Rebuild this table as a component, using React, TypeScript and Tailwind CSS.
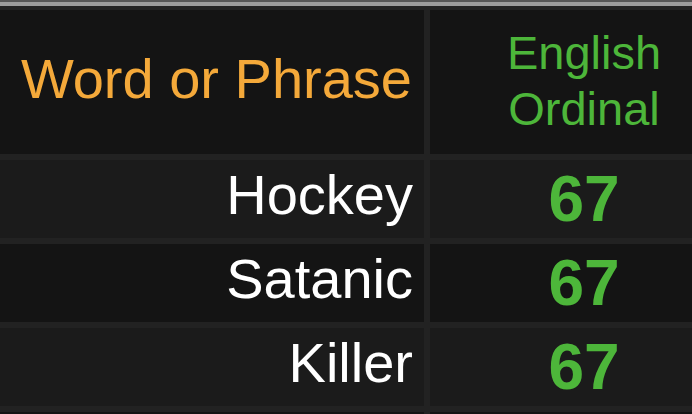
import React from 'react';

// Строки таблицы: слово и его значение в English Ordinal
const rows = [
  { word: 'Hockey', value: 67 },
  { word: 'Satanic', value: 67 },
  { word: 'Killer', value: 67 },
  { word: '', value: null },
];

export default function App() {
  return (
    <div className="w-[692px] h-[414px] overflow-hidden bg-[#222222] font-['Liberation_Sans',Arial,sans-serif]">
      {/* Верхняя полоса */}
      <div className="h-[2px] bg-[#555555]" />
      <div className="h-[4px] bg-[#9b9b9b]" />

      <div className="grid grid-cols-[424px_308px] gap-[6px] pt-[4px] bg-[#222222]">
        {/* Заголовок */}
        <div className="h-[144px] bg-[#141414] flex items-center justify-end pr-[12px] pb-[6px]">
          <span className="text-[56px] leading-none text-[#f4a93a]">Word or Phrase</span>
        </div>
        <div className="h-[144px] bg-[#141414] flex items-center justify-center pb-[2px]">
          <span className="text-[47px] leading-[56px] text-[#4db63a] text-center">
            English
            <br />
            Ordinal
          </span>
        </div>

        {rows.map((row, i) => {
          const bg = i % 2 === 0 ? 'bg-[#1b1b1b]' : 'bg-[#141414]';
          return (
            <React.Fragment key={i}>
              <div className={`h-[78px] ${bg} flex items-center justify-end pr-[11px] pb-[8px]`}>
                <span className="text-[56px] leading-none text-white">{row.word}</span>
              </div>
              <div className={`h-[78px] ${bg} flex items-center justify-center`}>
                <span className="text-[64px] leading-none font-bold text-[#4db63a]">
                  {row.value}
                </span>
              </div>
            </React.Fragment>
          );
        })}
      </div>
    </div>
  );
}
